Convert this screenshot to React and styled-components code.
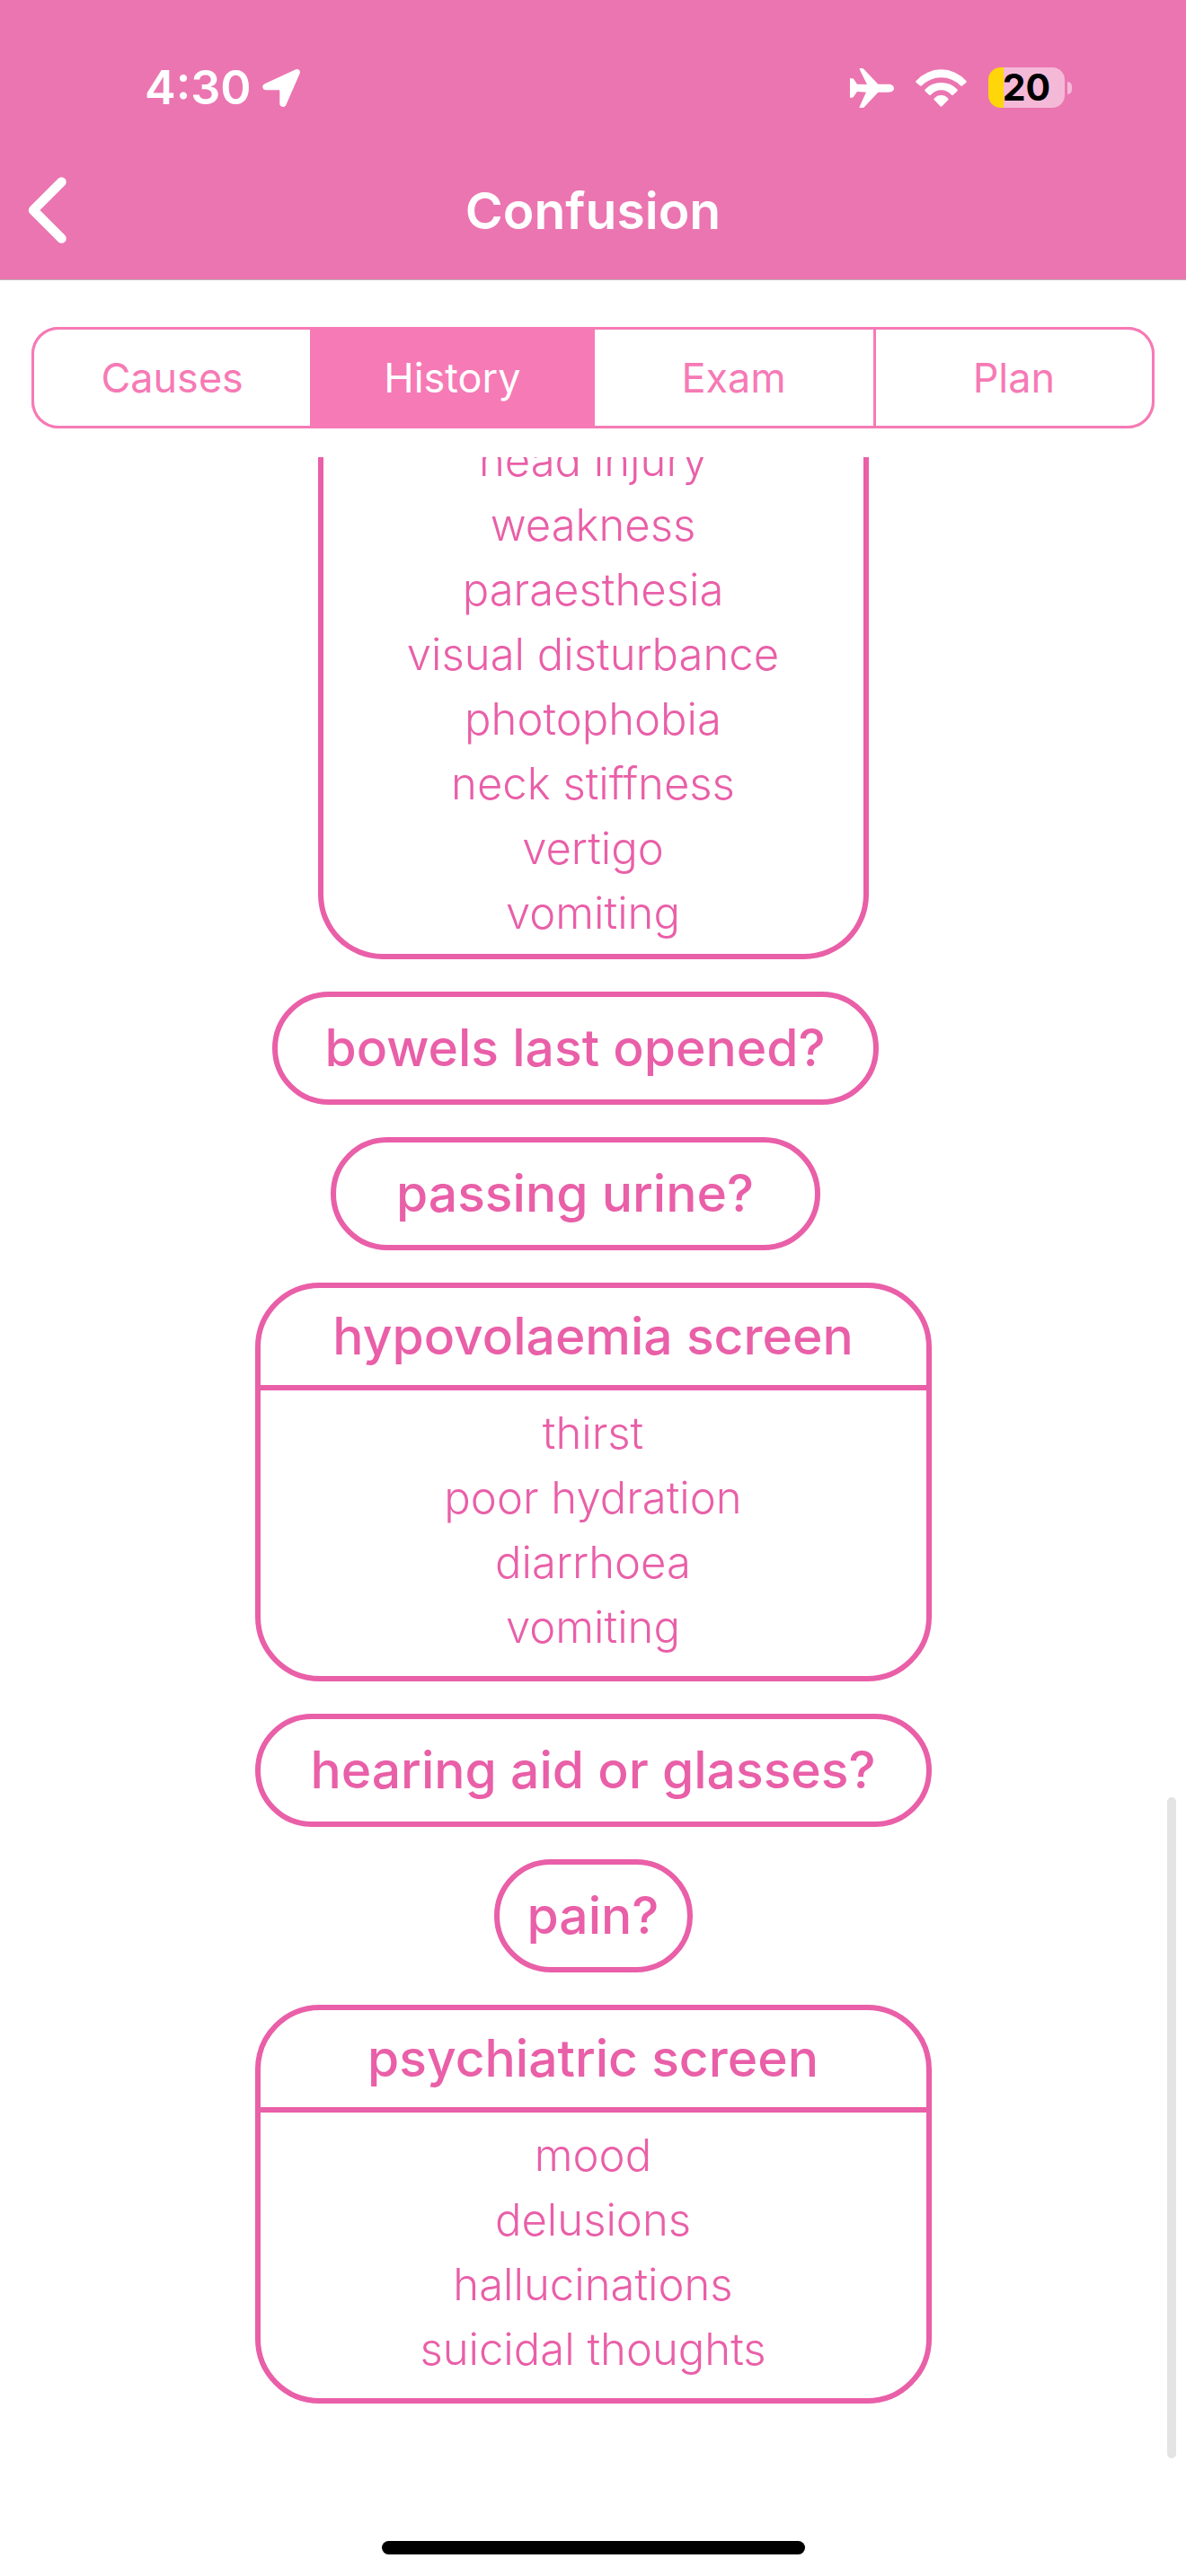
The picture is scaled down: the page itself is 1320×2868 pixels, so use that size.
import React, { useState } from "react";
import styled, { createGlobalStyle } from "styled-components";

const color = {
  header: "#eb75b0",
  tab: "#f67ab5",
  ink: "#e95fa8",
};

const GlobalStyle = createGlobalStyle`
  *, *::before, *::after { box-sizing: border-box; }
  html, body { margin: 0; background: #fff; }
  body { font-family: Inter, "Liberation Sans", sans-serif; }
`;

const Page = styled.div`
  display: flex;
  flex-direction: column;
  height: 100vh;
  overflow: hidden;
`;

const Header = styled.header`
  flex: none;
  background: ${color.header};
  border-bottom: 1px solid #bab2b6;
  color: #fff;
`;

const StatusBar = styled.div`
  display: flex;
  justify-content: space-between;
  height: 157px;
  padding: 38px 127px 0 161px;
`;

const StatusGroup = styled.div`
  display: flex;
  align-items: center;
  gap: ${(p) => p.$gap}px;
`;

const Time = styled.span`
  font-size: 52px;
  font-weight: 600;
`;

const Icon = styled.svg`
  display: block;
  flex: none;
  fill: currentColor;
`;

const Battery = styled.div`
  display: flex;
  align-items: center;
  gap: 3px;
`;

const BatteryBody = styled.div`
  width: 85px;
  height: 45px;
  border-radius: 14px;
  background: linear-gradient(to right, #ffd60a 17px, #f5b9d8 17px);
  color: #000;
  font-size: 41px;
  font-weight: 700;
  line-height: 45px;
  text-align: center;
`;

const BatteryNub = styled.div`
  width: 5px;
  height: 14px;
  border-radius: 0 5px 5px 0;
  background: #f5b9d8;
`;

const NavBar = styled.div`
  display: grid;
  grid-template-columns: 120px 1fr 120px;
  align-items: center;
  height: 154px;
`;

const BackButton = styled.button`
  display: flex;
  padding: 16px 31px;
  border: 0;
  background: none;
  color: inherit;
`;

const Title = styled.h1`
  margin: 0;
  font-size: 57px;
  font-weight: 600;
  text-align: center;
`;

const Tabs = styled.div`
  flex: none;
  display: grid;
  grid-template-columns: repeat(4, minmax(0, 1fr));
  gap: 3px;
  margin: 52px 35px 32px;
  border-radius: 30px;
  background: ${color.tab};
`;

const Tab = styled.button`
  height: 113px;
  padding: 0;
  border: 0 solid ${color.tab};
  border-width: 3px 0;
  background: ${(p) => (p.$active ? color.tab : "#fff")};
  color: ${(p) => (p.$active ? "#fff" : color.tab)};
  font-family: inherit;
  font-size: 45px;
  font-weight: 400;

  &:first-child {
    border-left-width: 3px;
    border-radius: 30px 0 0 30px;
  }
  &:last-child {
    border-right-width: 3px;
    border-radius: 0 30px 30px 0;
  }
`;

const Viewport = styled.main`
  position: relative;
  flex: 1;
  min-height: 0;
  display: flex;
  flex-direction: column;
  justify-content: flex-end;
  align-items: center;
  gap: 36px;
  padding-bottom: 153px;
  overflow: hidden;
  color: ${color.ink};
`;

const Card = styled.section`
  flex: none;
  width: ${(p) => p.$width}px;
  max-width: 100%;
  border: 6px solid ${color.ink};
  border-radius: 72px;
`;

/* Card whose heading is scrolled out of view. */
const OpenCard = styled(Card)`
  border-top: 0;
  border-radius: 0 0 72px 72px;
`;

const CardTitle = styled.h2`
  margin: 0;
  border-bottom: 6px solid ${color.ink};
  font-size: 57px;
  font-weight: 500;
  line-height: 108px;
  text-align: center;
`;

const List = styled.ul`
  margin: 0;
  padding: ${(p) => (p.$tight ? "0 0 9px" : "12px 0 18px")};
  list-style: none;
  font-size: 49px;
  font-weight: 300;
  line-height: 72px;
  text-align: center;
`;

const Pill = styled.h2`
  flex: none;
  width: ${(p) => p.$width}px;
  max-width: 100%;
  margin: 0 ${(p) => (p.$indented ? 40 : 0)}px 0 0;
  border: 6px solid ${color.ink};
  border-radius: 63px;
  font-size: 57px;
  font-weight: 500;
  line-height: 114px;
  text-align: center;
  white-space: nowrap;
`;

const ScrollThumb = styled.div`
  position: absolute;
  right: 11px;
  bottom: 92px;
  width: 10px;
  height: 736px;
  border-radius: 5px;
  background: #e4e4e4;
`;

const HomeBar = styled.footer`
  flex: none;
  display: flex;
  justify-content: center;
  padding-bottom: 24px;
`;

const HomeIndicator = styled.div`
  width: 471px;
  height: 15px;
  border-radius: 8px;
  background: #000;
`;

const tabs = ["Causes", "History", "Exam", "Plan"];

const neuro = [
  "head injury",
  "weakness",
  "paraesthesia",
  "visual disturbance",
  "photophobia",
  "neck stiffness",
  "vertigo",
  "vomiting",
];

function Items({ items, tight }) {
  return (
    <List $tight={tight}>
      {items.map((item) => (
        <li key={item}>{item}</li>
      ))}
    </List>
  );
}

function Screen({ title, items }) {
  return (
    <Card $width={753}>
      <CardTitle>{title}</CardTitle>
      <Items items={items} />
    </Card>
  );
}

function LocationIcon() {
  return (
    <Icon width="42" height="42" viewBox="0 0 124 124" aria-hidden="true">
      <path d="M110 1C120-2 126 6 123 14L78 117C74 127 57 126 57 114V72Q57 69 54 69H12C-1 69-3 53 8 48Z" />
    </Icon>
  );
}

function AirplaneIcon() {
  return (
    <Icon width="49" height="44" viewBox="0 0 147 132" aria-hidden="true">
      <path d="M0 34H7Q11 34 13 37L24 53L57 54L32 4Q31 0 35 0H40Q44 0 47 4L94 53H128C140 53 147 59 147 67C147 75 140 80 128 80H94L49 128Q46 132 42 132H34Q30 132 32 128L54 80L24 78L13 94Q11 98 7 98H0Z" />
    </Icon>
  );
}

function WifiIcon() {
  return (
    <Icon width="57" height="42" viewBox="0 0 172 127" aria-hidden="true">
      <path d="M2 39A112 112 0 0 1 170 39Q173 42 170 45L157 56Q154 58 152 56A92 92 0 0 0 20 56Q17 58 15 56L2 45Q-1 42 2 39Z" />
      <path d="M32 68A75 75 0 0 1 140 68Q143 71 140 74L127 86Q124 89 121 87A45 45 0 0 0 51 87Q48 89 45 86L32 74Q29 71 32 68Z" />
      <path d="M63 98A31 31 0 0 1 109 98Q112 101 110 103L89 125Q86 128 83 125L62 103Q60 101 63 98Z" />
    </Icon>
  );
}

function BackIcon() {
  return (
    <Icon width="43" height="74" viewBox="0 0 43 74" aria-hidden="true">
      <path
        d="M37.5 5.5L6 37L37.5 68.5"
        fill="none"
        stroke="currentColor"
        strokeWidth="10.5"
        strokeLinecap="round"
        strokeLinejoin="round"
      />
    </Icon>
  );
}

export default function App() {
  const [active, setActive] = useState("History");

  return (
    <Page>
      <GlobalStyle />
      <Header>
        <StatusBar>
          <StatusGroup $gap={12}>
            <Time>4:30</Time>
            <LocationIcon />
          </StatusGroup>
          <StatusGroup $gap={24}>
            <AirplaneIcon />
            <WifiIcon />
            <Battery>
              <BatteryBody>20</BatteryBody>
              <BatteryNub />
            </Battery>
          </StatusGroup>
        </StatusBar>
        <NavBar>
          <BackButton type="button" aria-label="Back">
            <BackIcon />
          </BackButton>
          <Title>Confusion</Title>
        </NavBar>
      </Header>

      <Tabs role="tablist">
        {tabs.map((name) => (
          <Tab
            key={name}
            type="button"
            role="tab"
            aria-selected={name === active}
            $active={name === active}
            onClick={() => setActive(name)}
          >
            {name}
          </Tab>
        ))}
      </Tabs>

      <Viewport>
        <OpenCard $width={613}>
          <Items items={neuro} tight />
        </OpenCard>
        <Pill $width={675} $indented>bowels last opened?</Pill>
        <Pill $width={545} $indented>passing urine?</Pill>
        <Screen
          title="hypovolaemia screen"
          items={["thirst", "poor hydration", "diarrhoea", "vomiting"]}
        />
        <Pill $width={753}>hearing aid or glasses?</Pill>
        <Pill $width={221}>pain?</Pill>
        <Screen
          title="psychiatric screen"
          items={["mood", "delusions", "hallucinations", "suicidal thoughts"]}
        />
        <ScrollThumb />
      </Viewport>

      <HomeBar>
        <HomeIndicator />
      </HomeBar>
    </Page>
  );
}
